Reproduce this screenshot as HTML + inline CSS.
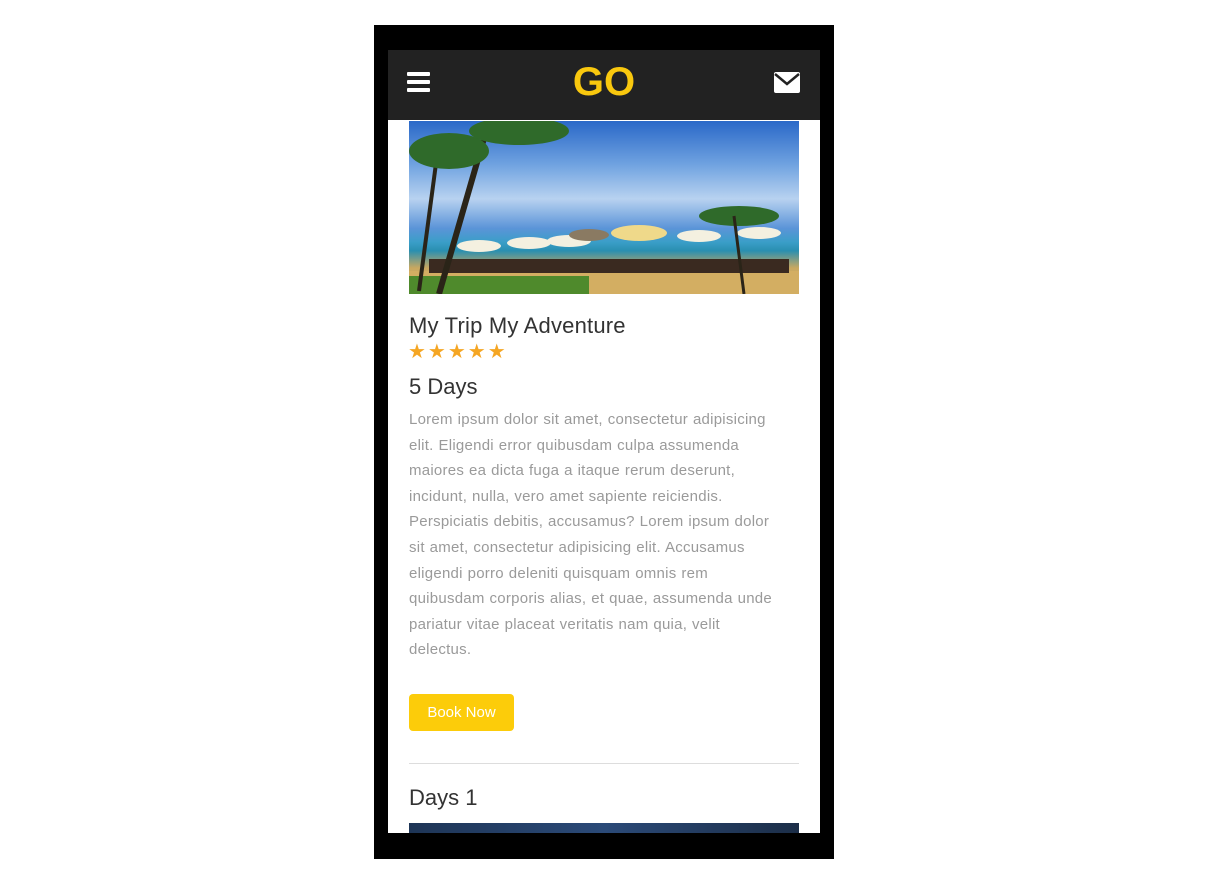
<!DOCTYPE html>
<html><head><meta charset="utf-8"><style>
*{margin:0;padding:0;box-sizing:border-box}
body{width:1208px;height:884px;background:#fff;position:relative;overflow:hidden;font-family:"Liberation Sans",sans-serif}
.frame{position:absolute;left:374px;top:25px;width:460px;height:834px;background:#000}
.screen{position:absolute;left:388px;top:50px;width:432px;height:783px;background:#fff;overflow:hidden}
.hdr{position:absolute;left:0;top:0;width:432px;height:70px;background:#222}
.logo{position:absolute;left:0;right:0;top:10px;text-align:center;color:#f9c80e;font-weight:bold;font-size:40px;letter-spacing:0px}
.img{position:absolute;left:21px;top:71px;width:390px;height:173px;overflow:hidden;
background:linear-gradient(180deg,#2a68c8 0%,#6fa2e0 25%,#b8d2f0 45%,#5b94d8 62%,#3a9ec8 70%,#2a8fb0 75%,#c9a860 85%,#d6b36a 100%)}
.t{position:absolute;left:21px;color:#333}
p.t{color:#9a9a9a;font-size:15px;line-height:25.6px;width:400px;white-space:nowrap;letter-spacing:0.25px;word-spacing:0.5px}
.btn{position:absolute;left:21px;top:644px;width:105px;height:37px;background:#fccc0a;border-radius:4px;color:#fff;font-size:15px;text-align:center;line-height:37px}
.hr{position:absolute;left:21px;top:713px;width:390px;height:1px;background:#ddd}
.img2{position:absolute;left:21px;top:773px;width:390px;height:20px;background:linear-gradient(90deg,#1e3556,#2b4a78,#1c2e48)}
</style></head><body>
<div class="frame"></div>
<div class="screen">
<div class="hdr">
<svg style="position:absolute;left:19px;top:22px" width="23" height="20"><rect x="0" y="0" width="23" height="4" rx="1" fill="#fff"/><rect x="0" y="8" width="23" height="4" rx="1" fill="#fff"/><rect x="0" y="16" width="23" height="4" rx="1" fill="#fff"/></svg>
<div class="logo">GO</div>
<svg style="position:absolute;left:386px;top:22px" width="26" height="21"><rect x="0" y="0" width="26" height="21" rx="2" fill="#fff"/><path d="M1 2 L13 12 L25 2" stroke="#222" stroke-width="2.5" fill="none"/></svg>
</div>
<div class="img">
<svg width="390" height="173">
<rect x="0" y="150" width="390" height="23" fill="#d3ae62"/>
<rect x="0" y="155" width="180" height="18" fill="#4f8a2c"/>
<g fill="#3a2a20"><rect x="20" y="138" width="360" height="14"/></g>
<g fill="#f4f0e0"><ellipse cx="70" cy="125" rx="22" ry="6"/><ellipse cx="120" cy="122" rx="22" ry="6"/><ellipse cx="160" cy="120" rx="22" ry="6"/><ellipse cx="230" cy="112" rx="28" ry="8" fill="#efd98a"/><ellipse cx="290" cy="115" rx="22" ry="6"/><ellipse cx="350" cy="112" rx="22" ry="6"/></g>
<ellipse cx="180" cy="114" rx="20" ry="6" fill="#8a7a62"/>
<path d="M30 173 L80 0" stroke="#2a2418" stroke-width="6"/>
<path d="M10 170 L30 20" stroke="#2a2418" stroke-width="4"/>
<g fill="#2f6a2a"><ellipse cx="40" cy="30" rx="40" ry="18"/><ellipse cx="110" cy="10" rx="50" ry="14"/><ellipse cx="330" cy="95" rx="40" ry="10"/></g>
<path d="M335 173 L325 95" stroke="#2a2418" stroke-width="3"/>
</svg>
</div>
<div class="t" style="top:263px;font-size:22px;letter-spacing:0.2px">My Trip My Adventure</div>
<div class="t" style="top:289px;font-size:20px;color:#f5a623;letter-spacing:2px;left:20px">★★★★★</div>
<div class="t" style="top:324px;font-size:22px">5 Days</div>
<p class="t" style="top:357px">Lorem ipsum dolor sit amet, consectetur adipisicing<br>elit. Eligendi error quibusdam culpa assumenda<br>maiores ea dicta fuga a itaque rerum deserunt,<br>incidunt, nulla, vero amet sapiente reiciendis.<br>Perspiciatis debitis, accusamus? Lorem ipsum dolor<br>sit amet, consectetur adipisicing elit. Accusamus<br>eligendi porro deleniti quisquam omnis rem<br>quibusdam corporis alias, et quae, assumenda unde<br>pariatur vitae placeat veritatis nam quia, velit<br>delectus.</p>
<div class="btn">Book Now</div>
<div class="hr"></div>
<div class="t" style="top:735px;font-size:22px">Days 1</div>
<div class="img2"></div>
</div>
</body></html>
